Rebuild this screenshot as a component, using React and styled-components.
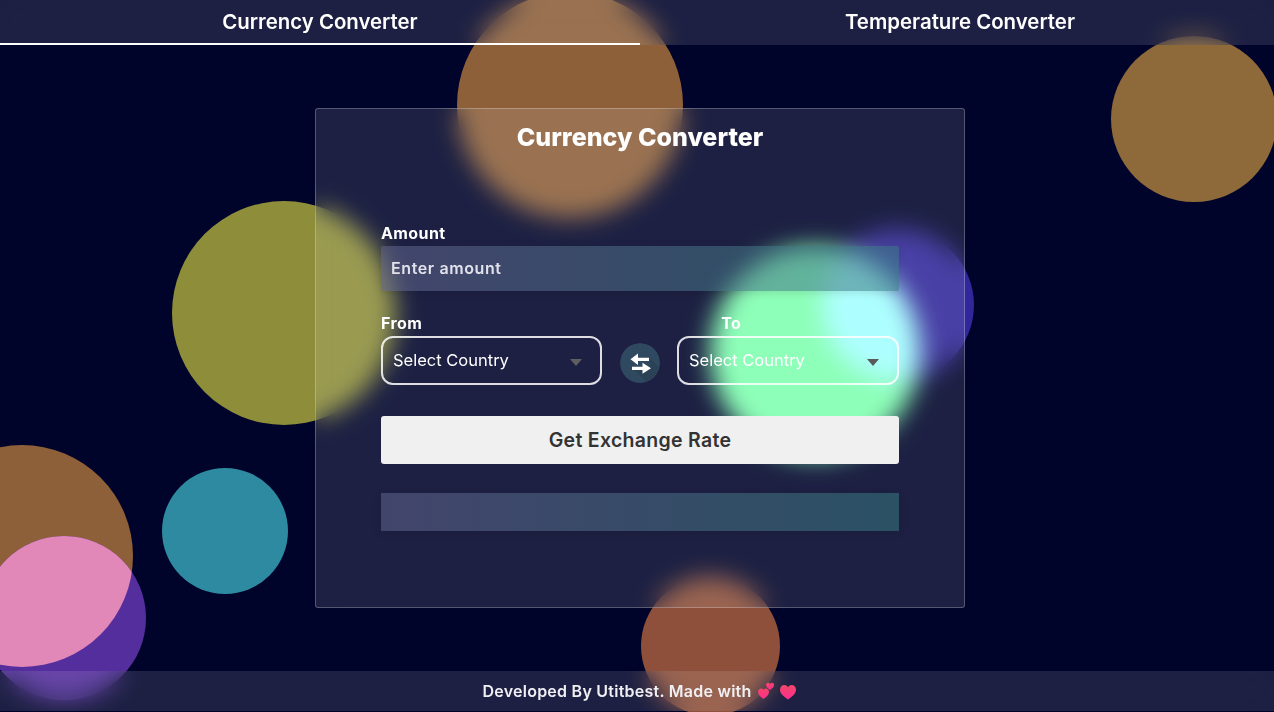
import React, { useState } from 'react'
import styled, { createGlobalStyle } from 'styled-components'

const GlobalStyle = createGlobalStyle`
  html, body {
    margin: 0;
    padding: 0;
    height: 100%;
    overflow: hidden;
    background: #00032a;
  }
  * {
    box-sizing: border-box;
    font-family: Inter, "Noto Sans", "Liberation Sans", sans-serif;
  }
`

function Bubbles() {
  return (
    <BubbleArt viewBox="0 0 1280 712" aria-hidden="true">
      <defs>
        <clipPath id="clipBrown"><circle cx="22" cy="556" r="111" /></clipPath>
        <clipPath id="clipBlue"><circle cx="898" cy="305" r="76" /></clipPath>
      </defs>
      <circle cx="570" cy="105" r="113" fill="#8e603a" />
      <circle cx="1194" cy="119" r="83" fill="#8e693a" />
      <circle cx="284" cy="313" r="112" fill="#8e8e3a" />
      <circle cx="225" cy="531" r="63" fill="#2d8aa0" />
      <circle cx="22" cy="556" r="111" fill="#8e603a" />
      <circle cx="64" cy="618" r="82" fill="#552e9d" />
      <circle cx="64" cy="618" r="82" fill="#e288b8" clipPath="url(#clipBrown)" />
      <circle cx="710.5" cy="646" r="69.5" fill="#8e503a" />
      <circle cx="898" cy="305" r="76" fill="#32279a" />
      <circle cx="815" cy="352" r="105" fill="#80ffaf" />
      <circle cx="815" cy="352" r="105" fill="#a4ffff" clipPath="url(#clipBlue)" />
    </BubbleArt>
  )
}

function SwapIcon() {
  return (
    <svg width="40" height="40" viewBox="0 0 40 40">
      <circle cx="20" cy="20" r="20" fill="#2f4a60" />
      <path d="M29 14.7 L38.5 24 A20 20 0 0 1 26 38.5 L14 27 L30.7 25 Z" fill="#2a4156" />
      <path d="M10.5 16.3 L18 10.6 V14.7 H29 V18 H18 V22 Z" fill="#fff" />
      <path d="M31 25.3 L22.5 19.8 V23.7 H12 V27 H22.5 V30.8 Z" fill="#fff" />
    </svg>
  )
}

function Hearts() {
  return (
    <HeartArt width="40" height="18" viewBox="0 0 40 18" aria-hidden="true">
      <defs>
        <linearGradient id="heartFill" x1="0" y1="0" x2="0" y2="1">
          <stop offset="0" stopColor="#f0476a" />
          <stop offset="1" stopColor="#ff2d8f" />
        </linearGradient>
      </defs>
      <path d="M5.5 17 C2 14.5 0 12.6 0 10 C0 8 1.5 6.6 3.2 6.6 C4.2 6.6 5 7.1 5.5 8 C6 7.1 7 6.6 8 6.6 C9.8 6.6 11 8 11 10 C11 12.6 9 14.5 5.5 17 Z" fill="url(#heartFill)" />
      <path d="M12 8 C9.8 6.4 8 5.3 8 3 C8 1.7 9 0.8 10 0.8 C10.8 0.8 11.5 1.2 12 2 C12.5 1.2 13.2 0.8 14 0.8 C15.2 0.8 16 1.7 16 3 C16 5.3 14.2 6.4 12 8 Z" fill="url(#heartFill)" />
      <path d="M30 17.5 C25 14 22 11.6 22 7.6 C22 5 24 3 26.3 3 C27.8 3 29.2 3.8 30 5.2 C30.8 3.8 32.2 3 33.7 3 C36 3 38 5 38 7.6 C38 11.6 35 14 30 17.5 Z" fill="url(#heartFill)" />
    </HeartArt>
  )
}

function CountrySelect({ dim, wide }) {
  return (
    <SelectWrap $wide={wide}>
      <CountryField defaultValue="">
        <option value="">Select Country</option>
        <option value="USD">United States</option>
        <option value="EUR">Europe</option>
      </CountryField>
      <Caret $dim={dim} />
    </SelectWrap>
  )
}

function App() {
  const [tab, setTab] = useState('currency')

  return (
    <Page>
      <GlobalStyle />
      <Bubbles />
      <TabBar>
        <Tab $active={tab === 'currency'} onClick={() => setTab('currency')}>Currency Converter</Tab>
        <Tab $active={tab === 'temperature'} onClick={() => setTab('temperature')}>Temperature Converter</Tab>
      </TabBar>

      <Main>
        <Card>
          <Title>Currency Converter</Title>
          <Label>Amount</Label>
          <AmountInput placeholder="Enter amount" />
          <LabelRow>
            <Label>From</Label>
            <ToLabel>To</ToLabel>
          </LabelRow>
          <SelectRow>
            <CountrySelect dim />
            <SwapButton aria-label="Swap currencies"><SwapIcon /></SwapButton>
            <CountrySelect wide />
          </SelectRow>
          <SubmitButton>Get Exchange Rate</SubmitButton>
          <ResultBox />
        </Card>
      </Main>

      <Footer>
        Developed By Utitbest. Made with <Hearts />
      </Footer>
    </Page>
  )
}

const Page = styled.div`
  position: relative;
  width: 1280px;
  height: 712px;
  overflow: hidden;
  display: flex;
  flex-direction: column;
  background: #00032a;
  color: #fff;
`

const BubbleArt = styled.svg`
  position: absolute;
  top: 0;
  left: 0;
  width: 1280px;
  height: 712px;
`

const TabBar = styled.nav`
  position: relative;
  display: flex;
  height: 45px;
  background: rgba(248, 255, 255, 0.118);
  backdrop-filter: blur(12px);
`

const Tab = styled.button`
  width: 640px;
  height: 45px;
  padding: 0;
  border: none;
  border-bottom: 2px solid ${(props) => (props.$active ? '#fff' : 'transparent')};
  background: transparent;
  color: #fff;
  font-size: 20.4px;
  font-weight: 600;
  cursor: pointer;
`

const Main = styled.main`
  position: relative;
  flex: 1;
  display: flex;
  justify-content: center;
  padding-top: 63px;
`

const Card = styled.section`
  width: 650px;
  height: 500px;
  padding: 14px 65px 0;
  display: flex;
  flex-direction: column;
  border: 1px solid rgba(255, 255, 255, 0.25);
  border-radius: 3px;
  background: rgba(248, 255, 255, 0.118);
  backdrop-filter: blur(12px);
`

const Title = styled.h1`
  margin: 0 0 72px;
  height: 28px;
  line-height: 28px;
  text-align: center;
  font-size: 25px;
  font-weight: 800;
`

const Label = styled.label`
  display: block;
  height: 20px;
  margin-bottom: 3px;
  line-height: 20px;
  font-size: 16px;
  font-weight: 700;
  letter-spacing: 0.4px;
`

const AmountInput = styled.input`
  width: 100%;
  height: 45px;
  padding: 0 10px 2px;
  border: none;
  border-radius: 2px;
  outline: none;
  background: linear-gradient(90deg, rgba(97, 100, 142, 0.55), rgba(54, 122, 130, 0.55));
  box-shadow: 0 2px 8px rgba(0, 0, 0, 0.12);
  color: #fff;
  font-size: 16px;
  font-weight: 600;
  letter-spacing: 0.6px;

  &::placeholder {
    color: #e2e2ec;
    opacity: 1;
  }
`

const LabelRow = styled.div`
  display: flex;
  margin-top: 22px;
`

const ToLabel = styled(Label)`
  margin-left: 299px;
`

const SelectRow = styled.div`
  display: flex;
  align-items: center;
  justify-content: space-between;
`

const SelectWrap = styled.div`
  position: relative;
  width: ${(props) => (props.$wide ? '222px' : '221px')};
`

const CountryField = styled.select`
  width: 100%;
  height: 49px;
  padding: 0 34px 2px 10px;
  border: 2px solid rgba(255, 255, 255, 0.85);
  border-radius: 12px;
  outline: none;
  appearance: none;
  background: transparent;
  color: #fff;
  font-size: 16.5px;
  font-weight: 400;

  option {
    color: #222;
  }
`

const Caret = styled.span`
  position: absolute;
  top: 23px;
  right: 20px;
  width: 0;
  height: 0;
  border-left: 6px solid transparent;
  border-right: 6px solid transparent;
  border-top: 7px solid ${(props) => (props.$dim ? '#5f5f5f' : '#5a5a5a')};
  pointer-events: none;
`

const SwapButton = styled.button`
  width: 40px;
  height: 40px;
  margin: 5px 0 0 1px;
  padding: 0;
  border: none;
  border-radius: 50%;
  overflow: hidden;
  background: none;
  cursor: pointer;
`

const SubmitButton = styled.button`
  width: 100%;
  height: 48px;
  margin-top: 31px;
  border: none;
  border-radius: 3px;
  background: #f0f0f0;
  color: #333;
  font-size: 19.5px;
  font-weight: 600;
  letter-spacing: 0.3px;
  cursor: pointer;
`

const ResultBox = styled.div`
  width: 100%;
  height: 38px;
  margin-top: 29px;
  background: linear-gradient(90deg, rgba(97, 100, 142, 0.55), rgba(54, 122, 130, 0.55));
  box-shadow: 0 2px 8px rgba(0, 0, 0, 0.12);
`

const Footer = styled.footer`
  position: relative;
  height: 40px;
  margin-bottom: 1px;
  display: flex;
  align-items: center;
  justify-content: center;
  gap: 6px;
  background: rgba(248, 255, 255, 0.118);
  backdrop-filter: blur(12px);
  color: #f0f0f4;
  font-size: 16px;
  font-weight: 600;
  letter-spacing: 0.25px;
`

const HeartArt = styled.svg`
  flex: none;
`

export default App
